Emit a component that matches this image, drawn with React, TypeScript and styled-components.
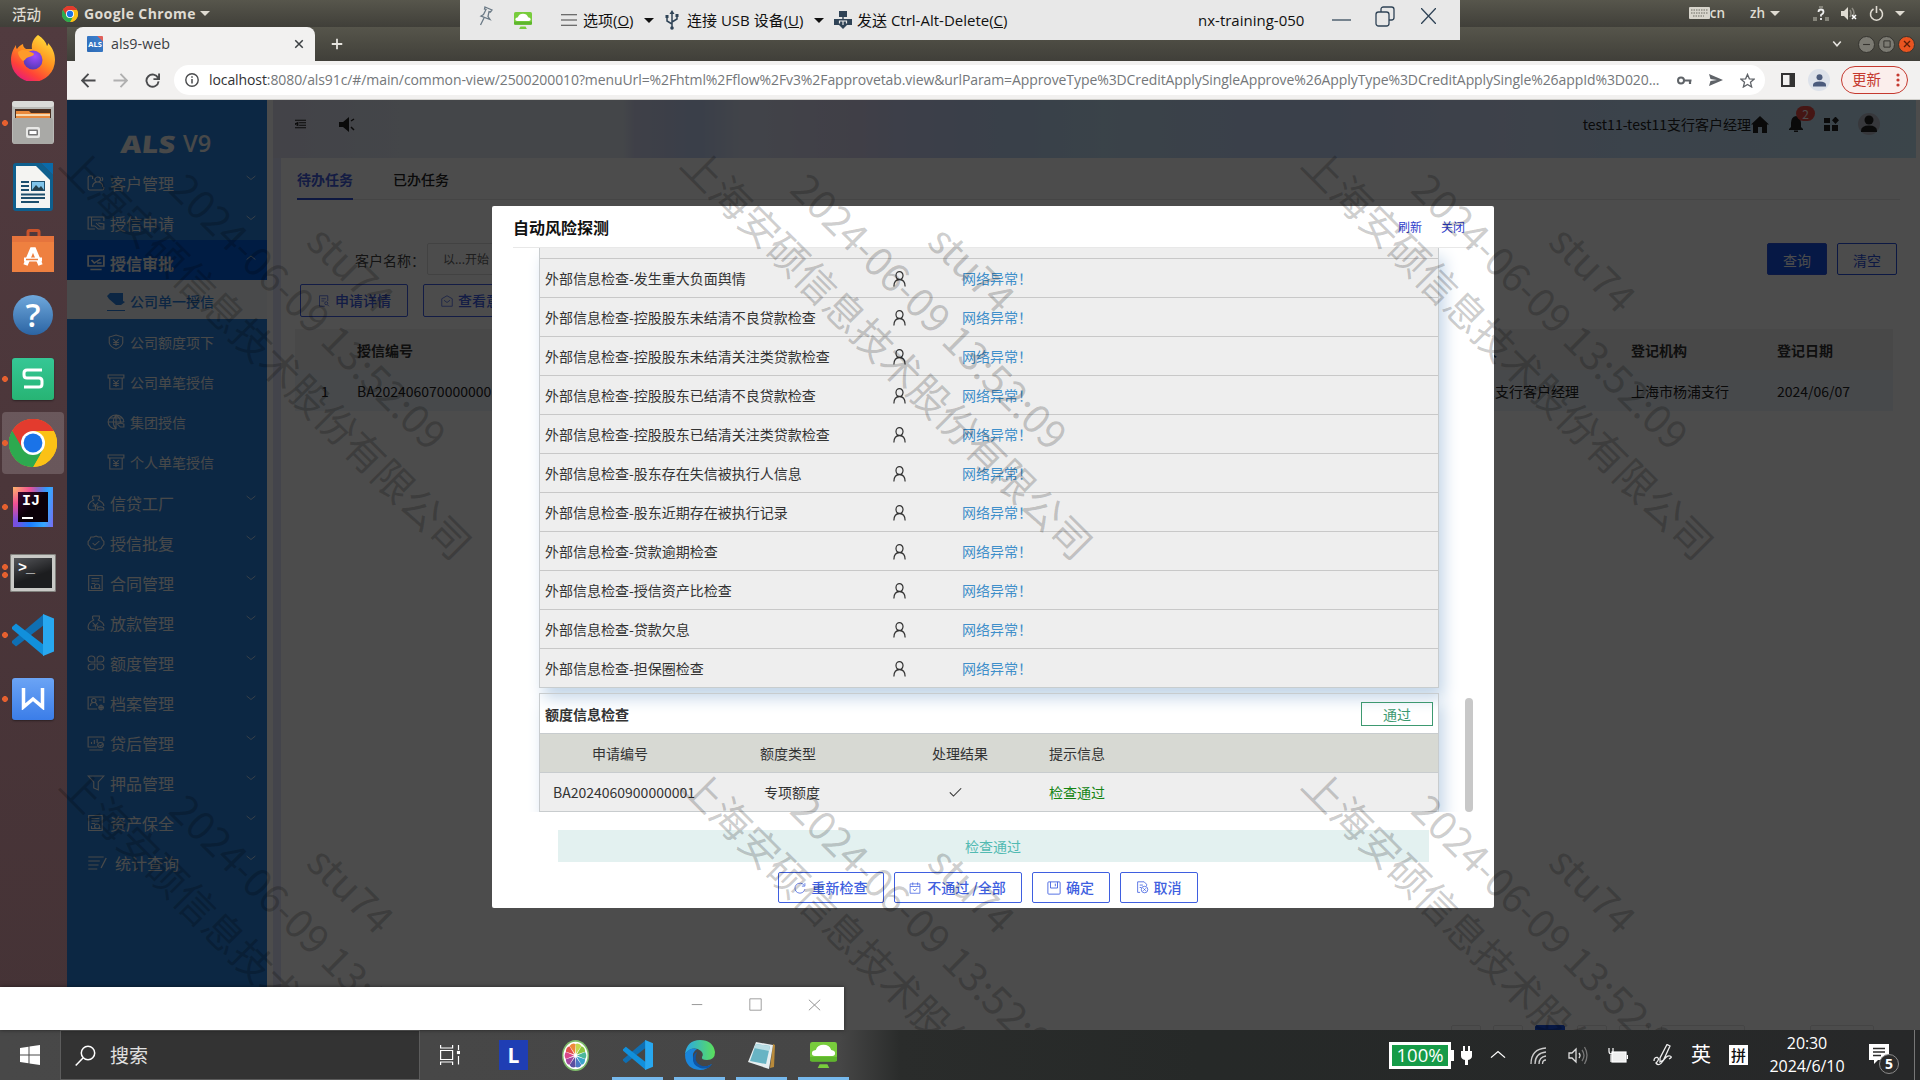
import React from "react";
import styled, { createGlobalStyle, css } from "styled-components";

const CJK = `"Noto Sans CJK SC", sans-serif`;
const UBUNTU = `"Open Sans", "Noto Sans CJK SC", sans-serif`;
const SEGOE = `"Open Sans", "Noto Sans CJK SC", sans-serif`;

const Global = createGlobalStyle`
  *, *::before, *::after { box-sizing: border-box; }
  body { margin: 0; background: #4d4d4d; overflow: hidden; }
  svg { display: block; flex: none; }
`;

/* ---------- generic glyph ---------- */
type GlyphProps = { d: string; size?: number; w?: number; h?: number; box?: number; stroke?: number; fill?: boolean; color?: string };
const Glyph = ({ d, size = 16, w, h, box = 16, stroke = 1, fill, color = "currentColor" }: GlyphProps) => (
  <svg width={w ?? size} height={h ?? size} viewBox={`0 0 ${box} ${box}`} preserveAspectRatio="none"
    fill={fill ? color : "none"} stroke={fill ? "none" : color} strokeWidth={stroke}>
    <path d={d} />
  </svg>
);

const Spacer = styled.div<{ $w?: number }>`
  ${(p) => (p.$w === undefined ? "flex: 1;" : `flex: none; width: ${p.$w}px;`)}
`;

/* ---------- desktop frame ---------- */
const Desktop = styled.div`
  position: relative;
  width: 1920px;
  height: 1080px;
  overflow: hidden;
  display: grid;
  grid-template-rows: 27px 1003px 50px;
  font-family: ${CJK};
`;

const TopBar = styled.div`
  display: flex;
  align-items: center;
  padding-left: 12px;
  background: linear-gradient(#57564c, #403f39);
  color: #dfdbd2;
  font: 15px/27px ${UBUNTU};
`;
const Activities = styled.span`
  width: 50px;
  font: 500 14.5px/27px ${CJK};
`;
const AppName = styled.span`
  margin-left: 6px;
  font-weight: 700;
  font-size: 14px;
  letter-spacing: 0.4px;
  width: 116px;
  white-space: nowrap;
`;
const BarText = styled.span`
  font-size: 13.5px;
  font-weight: 600;
`;
const Caret = styled.i<{ $s?: number; $c?: string }>`
  flex: none;
  border: ${(p) => p.$s ?? 5}px solid transparent;
  border-top-color: ${(p) => p.$c ?? "#dfdbd2"};
  border-bottom: 0;
`;

const Workspace = styled.div`
  display: grid;
  grid-template-columns: 67px 1fr;
  min-height: 0;
`;

/* ---------- dock ---------- */
const Dock = styled.div`
  background: linear-gradient(#513b3f, #4b363a 45%, #453336);
`;
const DockCell = styled.div<{ $active?: boolean; $down?: number }>`
  height: 64px;
  display: flex;
  align-items: center;
  padding-left: 2px;
  & > div:last-child {
    width: 62px;
    height: 62px;
    flex: none;
    margin: ${(p) => p.$down ?? 0}px 0 0 -6px;
    display: flex;
    align-items: center;
    justify-content: center;
    border-radius: 4px;
    background: ${(p) => (p.$active ? "rgba(255,255,255,.17)" : "none")};
  }
`;
const Dots = styled.div<{ $n: number }>`
  width: 6px;
  height: ${(p) => (p.$n > 1 ? 14 : 6)}px;
  flex: none;
  z-index: 1;
  background: ${(p) => (p.$n ? "radial-gradient(circle at 3px 3px, #e5602f 2.6px, transparent 3.2px)" : "none")};
  background-size: 6px 8px;
`;

const ChromeLogo = ({ size }: { size: number }) => (
  <svg width={size} height={size} viewBox="0 0 48 48">
    <circle cx="24" cy="24" r="24" fill="#fbc116" />
    <path d="M24 24 3.2 12A24 24 0 0 1 44.8 12z" fill="#e33b2e" />
    <path d="M24 24 3.2 12A24 24 0 0 0 24 48l10.4-18z" fill="#2da94f" />
    <path d="M24 12h20.8A24 24 0 0 1 24 48l10.4-18z" fill="#fbc116" />
    <path d="M3.2 12A24 24 0 0 1 44.8 12H24a12 12 0 0 0-10.4 6L13.6 30z" fill="#e33b2e" />
    <path d="M3.2 12 13.6 30A12 12 0 0 0 24 36h6.9L24 48A24 24 0 0 1 3.2 12z" fill="#2da94f" />
    <circle cx="24" cy="24" r="12" fill="#fff" />
    <circle cx="24" cy="24" r="9.4" fill="#1a73e8" />
  </svg>
);
const VsCodeLogo = ({ w, h }: { w: number; h: number }) => (
  <svg width={w} height={h} viewBox="0 0 42 42" preserveAspectRatio="none">
    <path d="M0 29 4 32.500 32 11V0L0 27z" fill="#0f6fb3" />
    <path d="M0 13 4 9.500 32 31v11L0 15z" fill="#1190dc" />
    <path d="M31 0l11 4.500v33L31 42z" fill="#28a8f0" />
  </svg>
);
const Firefox = () => (
  <svg width="46" height="46" viewBox="0 0 46 46">
    <defs>
      <linearGradient id="ff" x1="0.8" y1="0" x2="0.2" y2="1">
        <stop offset="0" stopColor="#ffe23c" /><stop offset=".45" stopColor="#ff8f1f" /><stop offset=".75" stopColor="#ff4238" /><stop offset="1" stopColor="#e31587" />
      </linearGradient>
      <radialGradient id="fg" cx=".6" cy=".3" r=".8"><stop offset="0" stopColor="#a04bff" /><stop offset="1" stopColor="#4b37ad" /></radialGradient>
    </defs>
    <path d="M28 0c5 3 8 7 9 11 1-1 1-2 1-3 5 5 7 11 7 17a22 22 0 0 1-44 0C1 18 4 13 6 10c0 2 0 3 1 4 2-3 4-4 6-5 0 2 1 4 3 5l6 0C21 8 24 3 28 0z" fill="url(#ff)" />
    <circle cx="23" cy="25" r="9.500" fill="url(#fg)" />
    <path d="M8 17c5-4 10-1 15 1 2 1 1 3-4 4-4 1-4 4-6 4-2-2-5-5-5-9z" fill="#ff9a2a" />
  </svg>
);
const Files = () => (
  <svg width="42" height="44" viewBox="0 0 42 44">
    <rect width="42" height="43" rx="3" fill="#b9b9b6" /><rect width="42" height="6" rx="3" fill="#dadad8" />
    <rect x="3" y="8" width="36" height="10" fill="#4a3023" /><path d="M4 10h13l2 2h19v5H4z" fill="#e9893c" /><rect x="4" y="13" width="34" height="2" fill="#f6d8b0" />
    <rect x="1" y="17" width="40" height="26" rx="2" fill="#a9a9a6" /><rect x="14" y="26" width="14" height="11" rx="2" fill="#e8e8e6" />
    <rect x="16" y="28.500" width="10" height="6" rx="1" fill="#777" /><rect x="17.500" y="30" width="7" height="3" fill="#fff" />
  </svg>
);
const Writer = () => (
  <svg width="40" height="48" viewBox="0 0 40 48">
    <path d="M3 0h25l12 12v33a3 3 0 0 1-3 3H3a3 3 0 0 1-3-3V3a3 3 0 0 1 3-3z" fill="#0e5f8e" />
    <path d="M28 0h12v12z" fill="#0a6aa8" />
    <path d="M3 3h20l14 14v28H3z" fill="#f4f4f2" />
    <path d="M8 19h8M8 23h8M8 27h8M8 31.500h24M8 35h24M8 39h18" stroke="#1d4f6d" strokeWidth="2" />
    <rect x="18" y="18" width="14" height="10" fill="#1d4f6d" /><rect x="19" y="19" width="12" height="8" fill="#7fc4ea" /><path d="M19 27l4-5 3 3 2-2 3 4z" fill="#24404c" />
  </svg>
);
const Software = () => (
  <svg width="42" height="44" viewBox="0 0 42 44">
    <path d="M16 12V3q0-1.500 1.500-1.500h8Q27 1.500 27 3v9" fill="none" stroke="#c9532b" strokeWidth="3" />
    <path d="M0 7h42v36H0z" fill="#ee8040" /><path d="M0 7h42v6H0z" fill="#d9653a" opacity=".45" />
    <path d="M13.500 36 20 20.500h2L28.500 36" stroke="#fff" strokeWidth="4.500" fill="none" /><path d="M12 30.500h18" stroke="#fff" strokeWidth="4" /><path d="M14 30.500h12" stroke="#ee8040" strokeWidth="1.500" />
  </svg>
);
const RoundHelp = styled.div`
  width: 40px; height: 40px; border-radius: 50%;
  background: linear-gradient(#6fa8dc, #2b64a3);
  color: #fff; text-align: center; font: 600 33px/40px "Open Sans", sans-serif;
`;
const Tile = styled.div<{ $bg: string; $size?: number }>`
  width: ${(p) => p.$size ?? 42}px; height: ${(p) => p.$size ?? 42}px; border-radius: 3px; background: ${(p) => p.$bg};
  display: flex; align-items: center; justify-content: center;
  box-shadow: 0 1px 2px rgba(0,0,0,.4);
`;
const IdeaFrame = styled.div`
  width: 40px; height: 40px; padding: 5px;
  background:
    radial-gradient(circle at 0 0, #fdb56a, rgba(255,80,140,.9) 30%, transparent 60%),
    linear-gradient(100deg, #7a4fe0 20%, #1b7dff 50%, #35a8ff 80%, #7a6af0);
`;
const IdeaInner = styled.div`
  height: 30px; background: linear-gradient(135deg, #3a0530, #0b0008 50%); color: #fff; padding: 1px 0 0 4px; font: 700 15px/17px "Liberation Mono", monospace;
  &::after { content: ""; display: block; width: 11px; height: 2px; margin-top: 7px; background: #fff; }
`;
const TerminalBox = styled.div`
  width: 46px; height: 38px; border: 4px solid #c9c9c6; border-radius: 2px; background: linear-gradient(160deg, #55565a, #1c1d1f 60%);
  outline: 1px solid #80807c; outline-offset: -1px;
  color: #fff; font: 700 15px/20px "Liberation Mono", monospace; padding: 1px 0 0 4px; letter-spacing: -1px;
`;

/* ---------- browser ---------- */
const Browser = styled.div`
  display: grid;
  grid-template-rows: 34px 39px 1fr;
  min-width: 0;
  min-height: 0;
`;
const TabStrip = styled.div`
  display: flex;
  align-items: center;
  padding: 0 5px 0 8px;
  background: linear-gradient(#56554b, #403f39);
  color: #e6e4df;
`;
const Tab = styled.div`
  width: 240px;
  height: 34px;
  display: flex;
  align-items: center;
  padding: 0 11px 0 12px;
  border-radius: 8px 8px 0 0;
  background: #f2f1f0;
  color: #3c4043;
  font: 14.3px/34px ${UBUNTU};
  span { margin-left: 8px; flex: 1; }
`;
const Favicon = styled.div`
  width: 16px; height: 16px; border-radius: 1px;
  background: linear-gradient(225deg, #e0605a 18%, #3b7ecb 19%, #2c69b4);
  color: #fff; font: 700 7.5px/16px "Open Sans", sans-serif; text-align: center;
`;
const WinButton = styled.div<{ $bg: string; $fg: string }>`
  width: 17px; height: 17px; margin-left: 3px; border-radius: 50%;
  border: 1px solid #35342f; background: ${(p) => p.$bg}; color: ${(p) => p.$fg};
  display: flex; align-items: center; justify-content: center;
`;
const Toolbar = styled.div`
  display: flex;
  align-items: center;
  padding-left: 14px;
  background: #f2f1f0;
  border-bottom: 1px solid #cfceca;
  color: #4a4b4d;
`;
const Address = styled.div`
  width: 1591px;
  height: 30px;
  margin-left: 14px;
  display: flex;
  align-items: center;
  padding: 0 10px 0 11px;
  border-radius: 15px;
  background: #fff;
`;
const Url = styled.div`
  width: 1462px;
  margin-left: 10px;
  white-space: nowrap;
  color: #74777a;
  font: 14px/30px ${UBUNTU};
  letter-spacing: -0.09px;
  b { font-weight: 400; color: #303134; }
`;
const Update = styled.div`
  width: 67px; height: 28px; margin-left: 11px; padding: 0 7px 0 10px;
  display: flex; align-items: center; justify-content: space-between;
  border: 1px solid #c5392f; border-radius: 14px; background: #fbeeec; color: #c5392f; font: 14.5px/24px ${CJK};
  span { padding-bottom: 2px; }
`;
const Profile = styled.div`
  width: 22px; height: 22px; border-radius: 50%; background: #dde2ea; display: flex; align-items: center; justify-content: center; margin-left: 13px;
`;

/* ---------- web page ---------- */
const Page = styled.div`
  position: relative;
  display: grid;
  grid-template-columns: 200px 1fr;
  min-height: 0;
  background: #fff;
  font: 14px/1.5 ${CJK};
`;
const Shade = styled.div`
  position: absolute;
  inset: 0;
  background: rgba(0, 0, 0, 0.7);
`;
const Sidebar = styled.div`
  background: #2882e0;
  color: #f2f4f6;
`;
const Logo = styled.div`
  height: 60px;
  display: flex;
  align-items: flex-end;
  padding: 0 0 4px 54px;
  font: 800 24px/24px "Open Sans", sans-serif;
  i { transform: skewX(-6deg) scaleX(1.2); transform-origin: left; width: 62px; font-style: normal; }
  span { font: 600 23.5px/25px "Open Sans", sans-serif; }
`;
const MenuItem = styled.div<{ $active?: boolean; $indent?: number }>`
  height: 40px;
  display: flex;
  align-items: center;
  padding: 0 11px 0 ${(p) => 20 + (p.$indent ?? 0)}px;
  font-size: 16px;
  span { flex: 1; margin: 6px 0 0 5px; }
  svg:first-child { margin-top: 5px; }
  svg:last-child { margin-top: -4px; }
  ${(p) => p.$active && css`background: #0060e0; font-weight: 700;`}
`;
const SubItem = styled.div<{ $on?: boolean }>`
  height: 40px;
  display: flex;
  align-items: center;
  padding: 4px 0 0 40px;
  gap: 5px;
  font-size: 14px;
  ${(p) => p.$on && css`height: 39px; margin-bottom: 1px; background: #f4f7fa; color: #2a80e0; font-weight: 500;
    svg { border-bottom: 1px solid #2a80e0; padding-bottom: 2px; }`}
`;
const Main = styled.div`
  margin: 0 4px 0 6px;
  display: grid;
  grid-template-rows: 58px 1fr;
  min-height: 0;
  min-width: 0;
`;
const PageHeader = styled.div`
  display: flex;
  align-items: center;
  padding: 0 36px 10px 20px;
  color: #222;
  background: linear-gradient(90deg, #dfe0f2 0, #e3e9f3 127px, #e3ebf5 350px, #d3d6f0 362px, #c1d2f4 425px, #dbe2f4 470px, #d8d4ee 580px, #cbd2f4 630px, #bfd5f5 730px, #c1dff5 830px, #c1d5f8 1020px, #cfdbf8 1230px, #c5dffa 1350px, #c5e6f8 1640px);
`;
const BellWrap = styled.div`
  position: relative;
  margin: 0 20px 0 19px;
`;
const Count = styled.div`
  position: absolute;
  left: 8px; top: -10px;
  width: 19px; height: 15px; border-radius: 8px;
  background: #e84a44; color: #fff; text-align: center; font: 12px/15px ${CJK};
`;
const Panel = styled.div`
  border-left: 8px solid #dfe3fa;
  padding: 0 0 0 14px;
  display: flex;
  flex-direction: column;
  min-height: 0;
  overflow: hidden;
`;
const Tabs = styled.div`
  display: flex;
  gap: 40px;
  height: 42px;
  width: 1603px;
  margin-left: 2px;
  border-bottom: 1px solid #e8e8e8;
`;
const PageTab = styled.div<{ $on?: boolean }>`
  height: 42px;
  line-height: 42px;
  color: ${(p) => (p.$on ? "#4560e0" : "#222")};
  font-weight: ${(p) => (p.$on ? 700 : 500)};
  border-bottom: 2px solid ${(p) => (p.$on ? "#2f50d8" : "transparent")};
`;
const Filter = styled.div`
  display: flex;
  align-items: center;
  height: 32px;
  margin: 43px 0 0 60px;
  padding-right: 19px;
  color: #444;
  label { width: 72px; padding-top: 2px; white-space: nowrap; }
`;
const Field = styled.div`
  width: 180px; height: 32px; border: 1px solid #dcdcdc; border-radius: 2px; padding-left: 15px;
  color: #666; font-size: 12px; line-height: 30px;
`;
const FlatButton = styled.div<{ $solid?: boolean }>`
  width: 60px; height: 32px; margin-left: 10px; text-align: center; line-height: 33px;
  border: 1px solid #2a52e0; border-radius: 2px;
  color: ${(p) => (p.$solid ? "#fff" : "#2a52e0")};
  background: ${(p) => (p.$solid ? "#1450e8" : "none")};
`;
const Actions = styled.div`
  display: flex;
  gap: 15px;
  margin: 9px 0 12px 5px;
`;
const Action = styled.div`
  width: 108px; height: 33px; display: flex; align-items: center; gap: 5px; padding-left: 17px;
  border: 1px solid #4060e8; border-radius: 2px; color: #4060e8; line-height: 31px; font-weight: 500;
`;
const GridRow = styled.div<{ $head?: boolean }>`
  display: grid;
  grid-template-columns: 62px 1098px 176px 146px 116px;
  width: 1598px;
  height: 41px;
  line-height: 43px;
  white-space: nowrap;
  color: ${(p) => (p.$head ? "#333" : "#222")};
  font-weight: ${(p) => (p.$head ? 700 : 400)};
  background: ${(p) => (p.$head ? "#f2f2f2" : "#eff5fb")};
  span:first-child { padding-left: 26px; }
`;
const Pager = styled.div`
  display: flex;
  align-items: flex-start;
  height: 5px;
  margin: auto 0 0 1156px;
  overflow: hidden;
`;
const PageBox = styled.div<{ $w?: number; $on?: boolean; $ml?: number }>`
  flex: none;
  width: ${(p) => p.$w ?? 30}px; height: 30px; margin-left: ${(p) => p.$ml ?? 12}px; border-radius: 2px;
  border: 1px solid ${(p) => (p.$on ? "#1450e8" : "#e4e4e4")};
  background: ${(p) => (p.$on ? "#1450e8" : "none")};
`;

/* ---------- modal ---------- */
const Modal = styled.div`
  position: absolute;
  left: 492px;
  top: 206px;
  width: 1002px;
  height: 702px;
  border-radius: 2px;
  background: #fff;
  color: #333;
  font: 14px/1.5 ${CJK};
  padding: 0 21px;
`;
const ModalHead = styled.div`
  height: 42px;
  display: flex;
  align-items: center;
  padding: 0 8px 0 0;
  border-bottom: 1px solid #e8e8e8;
  h1 { margin: 0; flex: 1; font-size: 16px; font-weight: 700; color: #111; }
  a { font-size: 12px; margin-left: 19px; color: #3040cc; }
`;
const ScrollBody = styled.div`
  height: 564px;
  overflow: hidden;
  display: flex;
  justify-content: space-between;
  padding-left: 26px;
`;
const Sheets = styled.div`
  width: 900px;
`;
const Thumb = styled.div`
  width: 8px;
  height: 114px;
  align-self: flex-end;
  border-radius: 4px;
  background: #c8c8c8;
`;
const Sheet = styled.div`
  border: 1px solid #c8ccce;
  border-top: 0;
  box-shadow: 5px 10px 15px #c4d6e8;
`;
const CheckRow = styled.div`
  height: 39px;
  display: grid;
  grid-template-columns: 347px 70px 1fr;
  align-items: center;
  padding: 0 0 0 5px;
  background: #eee;
  border-top: 1px solid #c8c8c8;
  em { font-style: normal; color: #3f8fca; }
`;
const SheetTail = styled.div`
  height: 10px;
  background: #eee;
`;
const QuotaSheet = styled(Sheet)`
  margin-top: 5px;
  border-top: 1px solid #c8ccce;
  position: relative;
`;
const QuotaTitle = styled.div`
  height: 39px;
  display: flex;
  align-items: center;
  justify-content: space-between;
  padding: 0 5px;
  font-weight: 700;
  > span { padding-top: 1px; }
`;
const PassTag = styled.div`
  width: 72px; height: 24px; border: 1px solid #3d9970; color: #3d9970; text-align: center; line-height: 23px; font-weight: 400; margin-top: 1px;
`;
const QuotaRow = styled.div<{ $head?: boolean }>`
  height: 39px;
  display: grid;
  grid-template-columns: ${(p) => (p.$head ? "160px 176px 168px" : "168px 168px 158px")} 1fr;
  align-items: center;
  justify-items: center;
  border-top: 1px solid #c8ccce;
  background: ${(p) => (p.$head ? "#d7d9d3" : "#eee")};
  > :last-child { justify-self: start; padding-left: ${(p) => (p.$head ? 5 : 15)}px; color: ${(p) => (p.$head ? "#333" : "#158515")}; }
`;
const Result = styled.div`
  height: 32px;
  margin: 18px 44px 10px 45px;
  padding-right: 1px;
  background: #e3f1f0;
  color: #52bab2;
  text-align: center;
  line-height: 32px;
`;
const Foot = styled.div`
  display: flex;
  justify-content: center;
  gap: 10px;
  padding-right: 11px;
`;
const FootButton = styled.div<{ $w: number; $gap?: number }>`
  width: ${(p) => p.$w}px; height: 31px; display: flex; align-items: center; justify-content: center; gap: ${(p) => p.$gap ?? 5}px;
  border: 1px solid #3f5fe0; border-radius: 2px; color: #3f5fe0; line-height: 30px; padding-bottom: 1px; white-space: nowrap; font-weight: 500;
  svg { margin-top: 1px; }
`;

/* ---------- watermark ---------- */
const WatermarkLayer = styled.div`
  position: absolute;
  inset: 100px 0 50px 0;
  overflow: hidden;
  pointer-events: none;
`;
const Mark = styled.div<{ $x: number; $y: number }>`
  position: absolute;
  left: ${(p) => p.$x - 300}px;
  top: ${(p) => p.$y - 190}px;
  width: 600px;
  height: 180px;
  transform: rotate(45deg);
  display: flex;
  flex-direction: column;
  align-items: center;
  color: rgba(0, 0, 0, 0.2);
  font: 40px/60px ${CJK};
`;

/* ---------- virtual machine bar ---------- */
const VmBar = styled.div`
  position: absolute;
  left: 460px;
  top: 0;
  width: 1000px;
  height: 40px;
  display: flex;
  align-items: center;
  background: #e8e8e8;
  color: #111;
  font: 15px/40px ${SEGOE};
  white-space: nowrap;
`;
const VmText = styled.span<{ $w: number; $ls?: number }>`
  width: ${(p) => p.$w}px;
  letter-spacing: ${(p) => p.$ls ?? 0}px;
`;

/* ---------- host taskbar ---------- */
const HostWindow = styled.div`
  position: absolute;
  left: 0;
  top: 987px;
  width: 844px;
  height: 43px;
  display: flex;
  justify-content: flex-end;
  gap: 45px;
  padding: 11px 22px 0 0;
  background: #fff;
  box-shadow: 0 0 4px rgba(0,0,0,.5);
  color: #8a8a8a;
`;
const Taskbar = styled.div`
  position: relative;
  display: flex;
  align-items: center;
  background: linear-gradient(90deg, #484848 0, #464646 840px, #2a2c2b 900px, #262928 1200px, #272829);
  color: #fff;
`;
const SearchBox = styled.div`
  width: 360px; height: 50px; display: flex; align-items: center; padding-left: 14px; margin-left: 20px;
  background: #333; border: 1px solid #5c5c5c; color: #e0e0e0; font: 19px/46px ${CJK};
  span { margin-left: 14px; }
`;
const AppSlot = styled.div<{ $open?: boolean }>`
  width: 51px; height: 50px; margin-right: 11px; display: flex; align-items: center; justify-content: center;
  border-bottom: ${(p) => (p.$open ? "3px solid #76b9ed" : "3px solid transparent")};
  padding-top: 3px;
`;
const LBox = styled.div`
  width: 29px; height: 30px; background: #1f3eb4; text-align: center; color: #fff; font: 700 21px/30px "Open Sans", sans-serif;
`;
const Battery = styled.div`
  width: 62px; height: 27px; border: 3px solid #fff; background: #169b48; text-align: center; font: 18.5px/20px ${SEGOE}; letter-spacing: 0;
`;
const ImeMode = styled.span`
  width: 22px; text-align: center; font: 20px/24px ${CJK}; padding-bottom: 3px;
`;
const Ime = styled.div`
  width: 19px; height: 20px; background: #fff; color: #111; font: 500 15px/19px ${CJK}; text-align: center; margin-left: 17px;
`;
const Clock = styled.div`
  width: 80px; margin-left: 19px; text-align: center; font: 16px/23px ${SEGOE}; letter-spacing: -0.1px; white-space: nowrap;
`;
const Notice = styled.div`
  position: relative; margin-left: 22px; width: 20px; height: 22px;
`;
const NoticeCount = styled.div`
  position: absolute; left: 10px; top: 10px; width: 20px; height: 20px; border: 1px solid #8a8a8a; border-radius: 50%; background: #2b2b2b; font: 700 14px/18px ${SEGOE}; text-align: center;
`;

/* ---------- icon shapes ---------- */
const I = {
  chevDown: "M1 4l7 7 7-7",
  chevUp: "M1 11l7-7 7 7",
  customer: "M5 1H2.500Q1 1 1 2.500v11Q1 15 2.500 15h11q1.500 0 1.500-1.500V12M5 1v3M9.500 7a2.500 2.500 0 1 0 0-5 2.500 2.500 0 0 0 0 5zM5 12q0-5 4.500-5T14 12M13 2q2 2 0 4",
  apply: "M15 6V2H1v12h6M4 2v9h3M5 5h7M8 8l4 4 3 0M7 11l3 3h5V9l-5-1",
  approve: "M15 1H1v10h14zM3 14.500h10M4 5l2.500 3L12 4M9 8h4",
  moneybag: "M5 1h6v2.500L10 5q5 2.500 5 6M5 1v2.500L6 5Q1 7.500 1 12q0 3 3 3h4M5 7.500l2.500 3 2.500-3M7.500 10.500V14M5 11h5M9.500 12.500q2-1.500 5 0 1 2.500 0 2.500h-5q-1-1 0-2.500z",
  badge: "M8 1l2 1 2.500 0 1 2.500L15 6.500v3l-1.500 2-1 2-2.500.5-2 1-2-1-2.500-.5-1-2L1 9.500v-3l1.500-2L3.500 2 6 2zM5 8l2 2 4-4",
  contract: "M1.500.500h12v15h-12zM4 3.500h7M4 6h7M4 8.500h3M9 13.500a2.300 2.300 0 1 0 0-4.600 2.300 2.300 0 0 0 0 4.600zM4 11v2.500h8",
  clover: "M7 7H4a3 3 0 1 1 3-3zM9 7h3a3 3 0 1 0-3-3zM7 9H4a3 3 0 1 0 3 3zM9 9h3a3 3 0 1 1-3 3z",
  archive: "M15 8V2H1v12h8M6 7.500a2 2 0 1 0 0-4 2 2 0 0 0 0 4zM3 11q0-3.500 3-3.500T9 11M10.500 5H13M12.500 14.500a2 2 0 1 0 0-4 2 2 0 0 0 0 4zM12.500 9.500v6M10 12.500h5",
  after: "M15 6V2H1v10h8M2 15h12M4 9V7M6.500 9V5M9 8V4M12 12.500a2.500 2.500 0 1 0 0-5 2.500 2.500 0 0 0 0 5zM11 10l1 1 2-2",
  funnel: "M1 1h14l-5 6v8l-4-2V7z",
  stats: "M1 2h12M1 6h9M1 10h8M1 14h7M15 3l-4 10",
  shield: "M8 1l6 2v6q-1 4-6 6-5-2-6-6V3zM5.500 5L8 8l2.500-3M8 8v4M5.500 8.500h5M5.500 10.500h5",
  box: "M1 1h14v3H1zM2.500 4v11h11V4M5.500 6L8 9l2.500-3M8 9v4M5.500 9.500h5M5.500 11.500h5",
  globe: "M15 8A7 7 0 1 0 8 15M1 8h14M8 1v14M8 1Q3 8 8 15M8 1q4 3 4 7M2.500 4h11M9 10l3 3h3v-3l-3-1z",
  doc: "M9 15H2V1h11v7M4.500 5h6M4.500 8h4M11 13a2 2 0 1 0 0-4 2 2 0 0 0 0 4zM12.500 13l2 2",
  env: "M1 5l7-4 7 4v10H1zM4 7l4 3 4-3",
  person: "M8 9a3.700 3.700 0 1 0 0-7.500A3.700 3.700 0 0 0 8 9zM2 15.500Q2.200 9 8 9t6 6.500",
  redo: "M14.500 9.500a6.700 6.700 0 1 1-1-5M14.500 1.500v4h-4",
  cal: "M1.500 2.500h13v12.500h-13zM5 .5v4M11.500 .5v4M5.500 9.500l2 2.500L11 8M1.500 6h13",
  save: "M1 2Q1 1 2 1h12q1 0 1 1v12q0 1-1 1H2q-1 0-1-1zM4 1v7h8V1M9.500 3v3",
  cancel: "M5 14H2V1h8l3 3v2M4.500 5h4M4.500 8h2M10.500 14.500a4 4 0 1 0 0-8 4 4 0 0 0 0 8zM9 9l3 3M12 9l-3 3",
  x: "M2 2l12 12M14 2L2 14",
};

const MENU_TAIL: [string, string, number?][] = [
  ["信贷工厂", I.moneybag], ["授信批复", I.badge], ["合同管理", I.contract], ["放款管理", I.moneybag], ["额度管理", I.clover],
  ["档案管理", I.archive], ["贷后管理", I.after], ["押品管理", I.funnel], ["资产保全", I.contract], ["统计查询", I.stats, 2.5],
];
const SUBS: [string, string][] = [["公司额度项下", I.shield], ["公司单笔授信", I.box], ["集团授信", I.globe], ["个人单笔授信", I.box]];
const CHECKS = [
  "发生重大负面舆情", "控股股东未结清不良贷款检查", "控股股东未结清关注类贷款检查", "控股股东已结清不良贷款检查", "控股股东已结清关注类贷款检查",
  "股东存在失信被执行人信息", "股东近期存在被执行记录", "贷款逾期检查", "授信资产比检查", "贷款欠息", "担保圈检查",
];
const MARKS = [[310, 310], [931, 310], [1552, 310], [310, 931], [931, 931], [1552, 931]];

const MenuLabel = styled.span<{ $shift: number }>`
  padding-left: ${(p) => p.$shift}px;
`;
const MenuRow = ({ label, icon, active, up, extra = 0 }: { label: string; icon: string; active?: boolean; up?: boolean; extra?: number }) => (
  <MenuItem $active={active}>
    <Glyph d={icon} w={18 + extra} h={16} stroke={active ? 1.5 : 1} />
    <MenuLabel $shift={extra}>{label}</MenuLabel>
    <Glyph d={up ? I.chevUp : I.chevDown} w={10} h={8} stroke={1.3} />
  </MenuItem>
);

const GreenMonitor = ({ w, h }: { w: number; h: number }) => (
  <svg width={w} height={h} viewBox="0 0 28 28" preserveAspectRatio="none">
    <rect width="28" height="21" rx="2.500" fill="#78cc3c" /><path d="M0 16h28v3q0 2-2 2H2q-2 0-2-2z" fill="#5eb62c" />
    <path d="M5 15q-3 0-3-3 0-3 4-3.500Q8 3 14 3t8 5.500q4 .5 4 3.500 0 3-3 3z" fill="#fff" /><path d="M10 24h8l2 4H8z" fill="#78cc3c" />
  </svg>
);
const Raised = styled.div<{ $by: number }>`
  padding-bottom: ${(p) => p.$by}px;
`;

export default function App() {
  return (
    <>
      <Global />
      <Desktop>
        <TopBar>
          <Activities>活动</Activities>
          <ChromeLogo size={16} />
          <AppName>Google Chrome</AppName>
          <Caret />
          <Spacer />
          <svg width="21" height="13" viewBox="0 0 21 13"><rect width="21" height="12" rx="1" fill="#d8d5cc" /><path d="M2 3h17M2 6h17M4 9h11" stroke="#6b6a60" strokeDasharray="1.500 1" /></svg>
          <BarText>cn</BarText>
          <Spacer $w={25} />
          <BarText>zh</BarText>
          <Spacer $w={5} />
          <Caret />
          <Spacer $w={33} />
          <svg width="16" height="15" viewBox="0 0 16 15"><path d="M6 0h4v2H6zM0 11h4v4H0zM12 11h4v4h-4z" fill="#85847a" /><path d="M5.500 6q0-2.500 2.500-2.500T10.500 6Q10.500 7.500 8 9v1.500M8 12v2" stroke="#eee" strokeWidth="1.800" fill="none" /></svg>
          <Spacer $w={11} />
          <svg width="18" height="15" viewBox="0 0 18 15"><path d="M1 5h3l4-4v13l-4-4H1z" fill="#dfdbd2" /><path d="M10 4q2 3 0 7M12 2q4 5 0 9" stroke="#8d8b82" fill="none" strokeWidth="1.500" /><path d="M12 9l4 4M16 9l-4 4" stroke="#fff" strokeWidth="1.500" /></svg>
          <Spacer $w={11} />
          <svg width="15" height="15" viewBox="0 0 15 15"><path d="M4.500 3a6 6 0 1 0 6 0M7.500 0v7" stroke="#dfdbd2" strokeWidth="1.600" fill="none" /></svg>
          <Spacer $w={11} />
          <Caret />
          <Spacer $w={15} />
        </TopBar>

        <Workspace>
          <Dock>
            <DockCell $down={-3}><Dots $n={0} /><div><Firefox /></div></DockCell>
            <DockCell><Dots $n={1} /><div><Files /></div></DockCell>
            <DockCell><Dots $n={0} /><div><Writer /></div></DockCell>
            <DockCell><Dots $n={0} /><div><Software /></div></DockCell>
            <DockCell><Dots $n={0} /><div><RoundHelp>?</RoundHelp></div></DockCell>
            <DockCell><Dots $n={1} /><div><Tile $bg="linear-gradient(#35c795,#27b474)"><svg width="22" height="22" viewBox="0 0 22 22"><path d="M20 2H5Q2 2 2 5v2q0 3 3 3h12q3 0 3 3v3q0 3-3 3H2" fill="none" stroke="#fff" strokeWidth="3" /></svg></Tile></div></DockCell>
            <DockCell $active><Dots $n={1} /><div><ChromeLogo size={48} /></div></DockCell>
            <DockCell><Dots $n={1} /><div><IdeaFrame><IdeaInner>IJ</IdeaInner></IdeaFrame></div></DockCell>
            <DockCell $down={3}><Dots $n={2} /><div><TerminalBox>&gt;_</TerminalBox></div></DockCell>
            <DockCell><Dots $n={1} /><div><VsCodeLogo w={42} h={42} /></div></DockCell>
            <DockCell><Dots $n={1} /><div><Tile $bg="linear-gradient(#6ba4f5,#3b7de8)"><svg width="24" height="22" viewBox="0 0 24 22"><path d="M2.500 0v19L12 11l9.500 8V0" fill="none" stroke="#fff" strokeWidth="3.500" /></svg></Tile></div></DockCell>
          </Dock>

          <Browser>
            <TabStrip>
              <Tab><Favicon>ALS</Favicon><span>als9-web</span><Glyph d={I.x} size={10} stroke={2.4} color="#3c4043" /></Tab>
              <Spacer $w={16} />
              <Glyph d="M8 1v14M1 8h14" size={12} stroke={2.4} />
              <Spacer />
              <Glyph d="M2 4l6 7 6-7" size={10} stroke={2.6} />
              <Spacer $w={13} />
              <WinButton $bg="#7b7a72" $fg="#35342f"><Glyph d="M3 8h10" size={11} stroke={1.6} /></WinButton>
              <WinButton $bg="#7b7a72" $fg="#35342f"><Glyph d="M3 3h10v10H3z" size={10} stroke={1.6} /></WinButton>
              <WinButton $bg="#e95420" $fg="#5a1e08"><Glyph d="M4 4l8 8M12 4l-8 8" size={12} stroke={1.8} /></WinButton>
            </TabStrip>
            <Toolbar>
              <Glyph d="M15.500 8H1.500M8 1L1.200 8 8 15" size={15} stroke={2} />
              <Spacer $w={17} />
              <Glyph d="M.5 8h14M8 1l6.800 7L8 15" size={15} stroke={2} color="#b0b0b0" />
              <Spacer $w={17} />
              <Glyph d="M14 5.500A6.500 6.500 0 1 0 14.500 9M15 .5v6H9" size={15} stroke={2} />
              <Address>
                <svg width="14" height="14" viewBox="0 0 14 14"><circle cx="7" cy="7" r="6.200" fill="none" stroke="#4a4b4d" strokeWidth="1.400" /><path d="M7 6v4.500M7 3.300v1.500" stroke="#4a4b4d" strokeWidth="1.500" /></svg>
                <Url><b>localhost</b>:8080/als91c/#/main/common-view/2500200010?menuUrl=%2Fhtml%2Fflow%2Fv3%2Fapprovetab.view&amp;urlParam=ApproveType%3DCreditApplySingleApprove%26ApplyType%3DCreditApplySingle%26appId%3D020...</Url>
                <Spacer $w={7} />
                <svg width="15" height="9" viewBox="0 0 15 9"><circle cx="4" cy="4.500" r="3" fill="none" stroke="#5f6368" strokeWidth="2" /><path d="M7 4.500h7.500M13 4.500v3.500" stroke="#5f6368" strokeWidth="2.200" /></svg>
                <Spacer $w={17} />
                <svg width="14" height="12" viewBox="0 0 14 12"><path d="M0 0l14 6-14 6 1.500-5L8 6 1.500 5z" fill="#5f6368" /></svg>
                <Spacer $w={17} />
                <Glyph d="M8 1.500l2 4.700 5 .4-3.800 3.300 1.200 5L8 12.200 3.600 14.900l1.200-5L1 6.600l5-.4z" size={15} stroke={1.400} color="#5f6368" />
              </Address>
              <Spacer $w={16} />
              <svg width="14" height="14" viewBox="0 0 14 14"><rect x="1" y="1" width="12" height="12" fill="none" stroke="#333" strokeWidth="2" /><rect x="8.500" y="1" width="5" height="12" fill="#333" /></svg>
              <Profile><svg width="13" height="13" viewBox="0 0 13 13" fill="#4b5b7c"><circle cx="6.500" cy="3.300" r="3" /><path d="M0 12.500V11q0-3.500 6.500-3.500T13 11v1.500z" /></svg></Profile>
              <Update><span>更新</span><svg width="4" height="14" viewBox="0 0 4 14" fill="#c5392f"><circle cx="2" cy="2" r="1.600" /><circle cx="2" cy="7" r="1.600" /><circle cx="2" cy="12" r="1.600" /></svg></Update>
            </Toolbar>

            <Page>
              <Sidebar>
                <Logo><i>ALS</i><span>V9</span></Logo>
                <div>
                  <MenuRow label="客户管理" icon={I.customer} />
                  <MenuRow label="授信申请" icon={I.apply} />
                  <MenuRow label="授信审批" icon={I.approve} active up />
                  <SubItem $on><svg width="18" height="18" viewBox="0 0 18 15"><path d="M0 3l3-3h13v8l2 1-4 3h-5L2 6z" fill="#2a80e0" /></svg>公司单一授信</SubItem>
                  {SUBS.map(([t, d]) => <SubItem key={t}><Glyph d={d} w={18} h={16} />{t}</SubItem>)}
                  {MENU_TAIL.map(([t, d, e]) => <MenuRow key={t} label={t} icon={d} extra={e} />)}
                </div>
              </Sidebar>
              <Main>
                <PageHeader>
                  <Spacer $w={2} />
                  <Glyph d="M0 2h16M6 6h10M6 10h10M0 14h16M0 8l4-2v4z" w={11} h={10} stroke={1.8} />
                  <Spacer $w={33} />
                  <svg width="16" height="15" viewBox="0 0 16 15"><path d="M0 5h4l6-5v15L4 10H0z" fill="#222" /><path d="M12 4l3-2M12 10l3 3" stroke="#222" strokeWidth="1.500" /></svg>
                  <Spacer />
                  <span>test11-test11支行客户经理</span>
                  <svg width="18" height="17" viewBox="0 0 18 17"><path d="M9 0l9 8.500h-2V17h-5v-6H7v6H2V8.500H0z" fill="#222" /></svg>
                  <BellWrap><svg width="16" height="16" viewBox="0 0 16 16"><path d="M8 0q5 1 5 7v4l2 2v1H1v-1l2-2V7q0-6 5-7zM6 14.500h4v1.500H6z" fill="#222" /></svg><Count>2</Count></BellWrap>
                  <svg width="15" height="14" viewBox="0 0 15 14"><path d="M0 1h6v5H0zM0 8h6v6H0zM8 8h6v6H8zM11.500-.5L15 3.300 11.500 7 8 3.300z" fill="#222" /></svg>
                  <Spacer $w={19} />
                  <svg width="22" height="22" viewBox="0 0 22 22"><circle cx="11" cy="11" r="11" fill="#b8bcc8" /><circle cx="11" cy="7" r="4.500" fill="#222" /><path d="M3 18q0-5.500 8-5.500t8 5.500v1H3z" fill="#222" /></svg>
                </PageHeader>
                <Panel>
                  <Tabs><PageTab $on>待办任务</PageTab><PageTab>已办任务</PageTab></Tabs>
                  <Filter>
                    <label>客户名称：</label><Field>以...开始</Field><Spacer /><FlatButton $solid>查询</FlatButton><FlatButton>清空</FlatButton>
                  </Filter>
                  <Actions>
                    <Action><Glyph d={I.doc} size={12} /><span>申请详情</span></Action>
                    <Action><Glyph d={I.env} size={12} /><span>查看意见</span></Action>
                  </Actions>
                  <GridRow $head><span /><span>授信编号</span><span>登记人</span><span>登记机构</span><span>登记日期</span></GridRow>
                  <GridRow><span>1</span><span>BA2024060700000001</span><span>test11支行客户经理</span><span>上海市杨浦支行</span><span>2024/06/07</span></GridRow>
                  <Pager>
                    <PageBox $ml={0} /><PageBox /><PageBox $on /><PageBox /><PageBox /><PageBox $w={84} /><PageBox $w={64} $ml={65} />
                  </Pager>
                </Panel>
              </Main>
              <Shade />
            </Page>
          </Browser>
        </Workspace>

        <Taskbar>
          <Spacer $w={20} />
          <svg width="20" height="20" viewBox="0 0 20 20" fill="#fff"><path d="M0 3l8.500-1.200v7.700H0zM9.500 1.600L20 0v9.500H9.500zM0 10.500h8.500v7.700L0 17zM9.500 10.500H20V20L9.500 18.400z" /></svg>
          <SearchBox><svg width="21" height="21" viewBox="0 0 21 21"><circle cx="13" cy="8" r="6.700" fill="none" stroke="#fff" strokeWidth="1.500" /><path d="M8 13L.7 20.500" stroke="#fff" strokeWidth="1.500" /></svg><span>搜索</span></SearchBox>
          <Spacer $w={20} />
          <svg width="20" height="20" viewBox="0 0 20 20" fill="none" stroke="#fff" strokeWidth="1.200"><path d="M.6 0v3h12V0M.6 20v-3h12v3M.6 5.500h12v9H.6zM18.500 0v5M18.500 11v8.500" /><rect x="17.500" y="6.500" width="2" height="2" fill="#fff" /></svg>
          <Spacer $w={28} />
          <AppSlot><LBox>L</LBox></AppSlot>
          <AppSlot>
            <svg width="27" height="31" viewBox="-14 -14 28 28" preserveAspectRatio="none"><circle r="14" fill="#7dbb6a" /><circle r="12.500" fill="#fff" />
              {["#c3d94e", "#8cc63f", "#4cb89b", "#3aa5c9", "#4a78c4", "#5b4ea0", "#a2489f", "#d9488a", "#e2504a", "#ef8a3a"].map((c, i) => (
                <path key={c} transform={`rotate(${i * 36 + 18})`} d="M0-1.500 3.200-10Q0-12.500-3.200-10z" fill={c} />
              ))}
            </svg>
          </AppSlot>
          <AppSlot $open><VsCodeLogo w={30} h={30} /></AppSlot>
          <AppSlot $open>
            <svg width="30" height="30" viewBox="0 0 30 30">
              <defs><linearGradient id="eg" x1="0" x2="1"><stop offset="0" stopColor="#2aa7e8" /><stop offset="1" stopColor="#5be05a" /></linearGradient></defs>
              <path d="M0 14Q2 0 15 0t15 12q0 8-8 8-6 0-5-3 2-3-1-6Q8 5 0 14z" fill="url(#eg)" />
              <path d="M0 14Q5 7 12 9q-5 3-4 9 1 8 10 9 4 0 9-3-5 6-12 6Q0 29 0 14z" fill="#1a86dc" />
              <path d="M12 12q-4 9 3 13 5 3 12-1-3 6-12 4-8-3-7-10 1-5 4-6z" fill="#0f55a5" />
            </svg>
          </AppSlot>
          <AppSlot $open><svg width="28" height="28" viewBox="0 0 28 28"><path d="M25 3l2 1-1 22-4 1z" fill="#b98a3a" /><path d="M8 1l17 3-4 24L0 21z" fill="#e6eef0" /><path d="M8 3l14 2-4 18L2 20z" fill="#68b4c4" /><path d="M8 3l14 2-1 5-15-3z" fill="#b9dde4" /></svg></AppSlot>
          <AppSlot $open><GreenMonitor w={27} h={26} /></AppSlot>
          <Spacer />
          <Battery>100%</Battery>
          <svg width="3" height="11"><rect width="3" height="11" fill="#fff" /></svg>
          <Spacer $w={7} />
          <svg width="11" height="19" viewBox="0 0 11 19" fill="#fff"><path d="M2 0h2v5h3V0h2v5h2v5q0 3-4 4v5H4v-5q-4-1-4-4V5h2z" /></svg>
          <Spacer $w={18} />
          <Glyph d={I.chevUp} w={16} h={14} stroke={1.3} />
          <Spacer $w={24} />
          <svg width="17" height="17" viewBox="0 0 17 17" fill="none" stroke="#ccc" strokeWidth="1.300"><path d="M1 17Q1 2 16 1M5 17Q5 6 16 5M9 17q0-7 7-8M12.500 17q0-4 3.500-4" /></svg>
          <Spacer $w={21} />
          <svg width="20" height="19" viewBox="0 0 20 19" fill="none" stroke="#ddd" strokeWidth="1.300"><path d="M1 7h3l4-4v13l-4-4H1zM11 7q2 2.500 0 5" /><path d="M14 4q4 5.500 0 11M16.500 1q5 8 0 17" stroke="#777" /></svg>
          <Spacer $w={20} />
          <svg width="20" height="15" viewBox="0 0 20 15" fill="none" stroke="#fff" strokeWidth="1.200"><rect x="4" y="4" width="14" height="10" fill="#eee" /><path d="M19.400 7v4M3 7v7M1 0v3q0 3 2 3t2-3V0" /></svg>
          <Spacer $w={25} />
          <svg width="20" height="22" viewBox="0 0 20 22" fill="none" stroke="#eee" strokeWidth="1.300"><path d="M17 2l-3-1.500L7 14l0 4 3.500-2zM1 17q0-4 3.500-3.500Q7 15 3 19q3 4 7-2t7-5q3 1-1 3" /></svg>
          <Spacer $w={17} />
          <ImeMode>英</ImeMode>
          <Ime>拼</Ime>
          <Clock>20:30<br />2024/6/10</Clock>
          <Notice><svg width="20" height="20" viewBox="0 0 20 20"><path d="M0 0h20v16H9l-4 4v-4H0z" fill="#fff" /><path d="M4 4.500h12M4 8h12M4 11.500h8" stroke="#2b2b2b" strokeWidth="1.300" /></svg><NoticeCount>5</NoticeCount></Notice>
          <Spacer $w={25} />
          <svg width="6" height="50"><path d="M.5 0v50" stroke="#777" /></svg>
        </Taskbar>

        <Modal>
          <ModalHead><h1>自动风险探测</h1><a>刷新</a><a>关闭</a></ModalHead>
          <ScrollBody>
            <Sheets>
              <Sheet>
                <SheetTail />
                {CHECKS.map((c) => (
                  <CheckRow key={c}><span>外部信息检查-{c}</span><Glyph d={I.person} w={15} h={17} stroke={1.3} /><em>网络异常！</em></CheckRow>
                ))}
              </Sheet>
              <QuotaSheet>
                <QuotaTitle><span>额度信息检查</span><PassTag>通过</PassTag></QuotaTitle>
                <QuotaRow $head><span>申请编号</span><span>额度类型</span><span>处理结果</span><span>提示信息</span></QuotaRow>
                <QuotaRow><span>BA2024060900000001</span><span>专项额度</span><Glyph d="M1 8.500l4.500 5L15 3" w={13} h={12} stroke={1.3} /><span>检查通过</span></QuotaRow>
              </QuotaSheet>
            </Sheets>
            <Thumb />
          </ScrollBody>
          <Result>检查通过</Result>
          <Foot>
            <FootButton $w={106} $gap={6}><Glyph d={I.redo} size={12} />重新检查</FootButton>
            <FootButton $w={128} $gap={6}><Glyph d={I.cal} size={12} />不通过 /全部</FootButton>
            <FootButton $w={78}><Glyph d={I.save} size={14} />确定</FootButton>
            <FootButton $w={78}><Glyph d={I.cancel} size={13} />取消</FootButton>
          </Foot>
        </Modal>

        <WatermarkLayer>
          {MARKS.map(([x, y]) => (
            <Mark key={`${x}-${y}`} $x={x} $y={y}><span>stu74</span><span>2024-06-09 13:52:09</span><span>上海安硕信息技术股份有限公司</span></Mark>
          ))}
        </WatermarkLayer>

        <VmBar>
          <Spacer $w={19} />
          <Raised $by={9}><svg width="14" height="20" viewBox="0 0 14 20" fill="none" stroke="#6b7a86" strokeWidth="1.300"><path d="M6 1l7 3-1.500 2-1.500-.5-1 5 2 3-9-3.500 2.500-1.500 2.500-5L5.500 3zM5 12l-3.500 7" /></svg></Raised>
          <Spacer $w={21} />
          <GreenMonitor w={18} h={17} />
          <Spacer $w={29} />
          <Glyph d="M0 2h16M0 8h16M0 14h16" w={16} h={14} stroke={1.2} color="#444" />
          <Spacer $w={6} />
          <VmText $w={61}>选项(<u>O</u>)</VmText>
          <Caret $c="#111" />
          <Spacer $w={11} />
          <svg width="14" height="20" viewBox="0 0 14 20" fill="none" stroke="#2f4356" strokeWidth="1.500"><path d="M7 2v16M7 14L2 11V7M7 12l5-3V6" /><circle cx="7" cy="18" r="1.800" fill="#2f4356" stroke="none" /><path d="M7 0l2.500 4h-5zM.5 5h3v3h-3zM10.500 4h3v3h-3z" fill="#2f4356" stroke="none" /></svg>
          <Spacer $w={8} />
          <VmText $w={127}>连接 USB 设备(<u>U</u>)</VmText>
          <Caret $c="#111" />
          <Spacer $w={10} />
          <svg width="18" height="18" viewBox="0 0 18 18" fill="#2f4356"><path d="M5 0h8v6H5zM8.300 6h1.400v2H8.300zM0 8h18v6h-5l-4 4-4-4H0z" /><path d="M5.500 9.500v3M12.500 9.500v3M5.500 10h7M9 10v4" stroke="#e8e8e8" strokeWidth="1.200" /></svg>
          <Spacer $w={5} />
          <VmText $w={341}>发送 Ctrl-Alt-Delete(<u>C</u>)</VmText>
          <VmText $w={134}>nx-training-050</VmText>
          <Glyph d="M0 8h16" w={19} h={14} stroke={1.4} color="#2f4356" />
          <Spacer $w={24} />
          <Raised $by={8}><svg width="21" height="21" viewBox="0 0 21 21" fill="none" stroke="#2f4356" strokeWidth="1.300"><rect x="1" y="6" width="13" height="14" rx="2.500" /><path d="M6 6V3.500Q6 1 8.500 1h8Q19 1 19 3.500v8Q19 14 16.500 14H14" /></svg></Raised>
          <Spacer $w={25} />
          <Raised $by={9}><Glyph d="M0 0l16 16M16 0L0 16" w={15} h={16} stroke={1.4} color="#2f4356" /></Raised>
        </VmBar>

        <HostWindow>
          <Glyph d="M2 7.500h12" w={14} h={14} />
          <Glyph d="M1 1h14v14H1z" w={13} h={13} />
          <Glyph d={I.x} w={15} h={14} />
        </HostWindow>
      </Desktop>
    </>
  );
}
